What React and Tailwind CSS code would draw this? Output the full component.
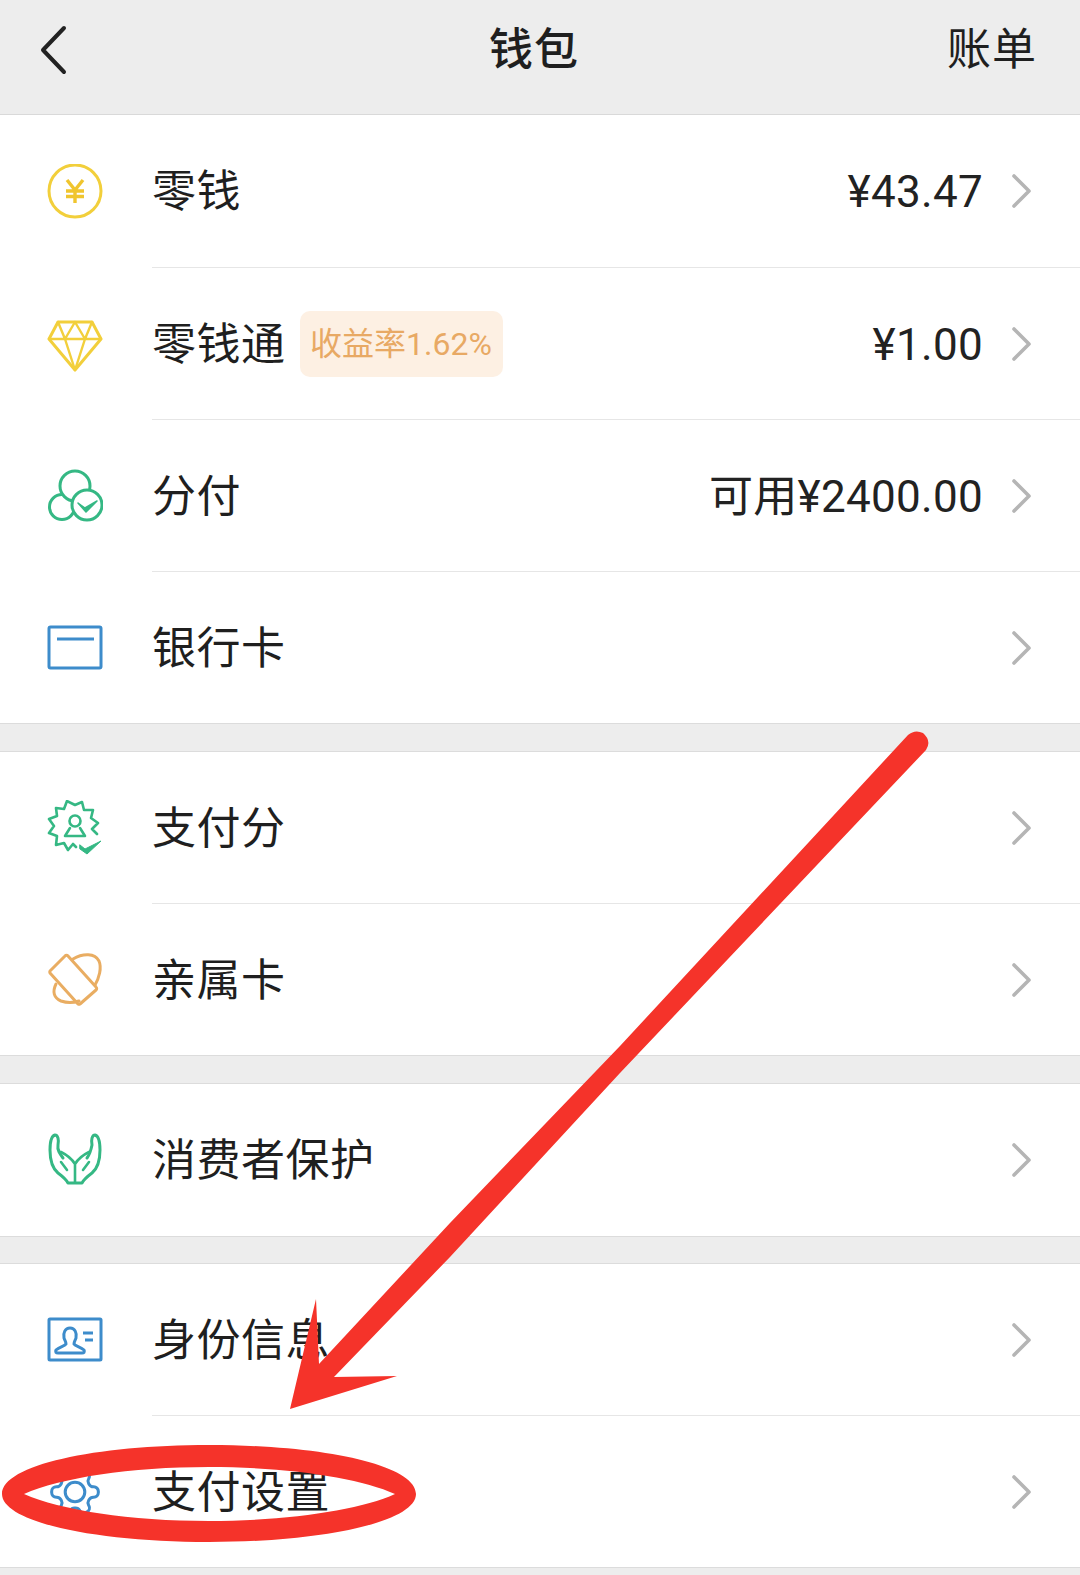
const GREEN = "#35b884";
const BLUE = "#3d8ccb";
const YELLOW = "#f2cf3b";
const ORANGE = "#e9ad62";

function Icon({ children, stroke }) {
  return (
    <svg width="56" height="56" viewBox="0 0 56 56" fill="none" stroke={stroke} strokeWidth="3" strokeLinecap="round" strokeLinejoin="round">
      {children}
    </svg>
  );
}

const ICON_COIN = (
  <Icon stroke={YELLOW}>
    <circle cx="28" cy="27" r="26" />
    <path d="M20 16l8 10 8-10M19 27h18M19 32.5h18M28 26v13" stroke="#f0c52e" strokeWidth="3.4" strokeLinecap="butt" />
  </Icon>
);

const ICON_DIAMOND = (
  <Icon stroke={YELLOW}>
    <path d="M11 6h34l9 17-26 31L2 23z" />
    <path d="M2 23h52M18 23l10 31 10-31M18 23l10-17 10 17M11 6l7 17M45 6l-7 17" strokeWidth="2.4" />
  </Icon>
);

const ICON_FENFU = (
  <Icon stroke={GREEN}>
    <circle cx="15" cy="39" r="12.5" fill="white" />
    <circle cx="28" cy="18" r="15" fill="white" />
    <circle cx="40" cy="37" r="15" fill="white" />
    <path d="M31 35l7 5 12-7-11 11z" fill={GREEN} strokeWidth="1.5" />
  </Icon>
);

const ICON_CARD = (
  <Icon stroke={BLUE}>
    <rect x="2" y="7" width="52" height="41" rx="1.5" />
    <path d="M10 19h37" strokeLinecap="butt" />
  </Icon>
);

const ICON_SCORE = (
  <Icon stroke={GREEN}>
    <path d="M29 47l-3-3-5 6-4-7-8 2 1-9-8-3 5-7-5-7 8-3-1-8 8 1 3-8 8 4 7-3 2 8 9 0-2 8 7 5-6 6 5 5" strokeWidth="2.6" />
    <circle cx="28" cy="21" r="5.5" strokeWidth="2.6" />
    <path d="M18 36l5-8M38 36l-5-8M18 36h20" strokeWidth="2.6" />
    <path d="M33 45l5 4 16-8-14 13-7-5z" fill={GREEN} strokeWidth="1" />
  </Icon>
);

const ICON_FAMILY = (
  <Icon stroke={ORANGE}>
    <path d="M18 4L3 19a2 2 0 0 0 0 2l28 31a2 2 0 0 0 2 0l16-14a2 2 0 0 0 0-3L21 4a2 2 0 0 0-3 0z" />
    <path d="M26 7c10-6 22-6 26 2 3 7 0 17-4 24" />
    <path d="M9 32c-4 8-2 14 5 17 6 2 12 2 18 0" />
  </Icon>
);

const ICON_HANDS = (
  <Icon stroke={GREEN}>
    <path d="M27 51h-6c-2-4-6-7-10-10-6-5-8-12-8-23 0-6 1-14 5-15 3 0 4 5 3 10-1 5 2 9 5 13" />
    <path d="M29 51h6c2-4 6-7 10-10 6-5 8-12 8-23 0-6-1-14-5-15-3 0-4 5-3 10-1 5-2 9-5 13" />
    <path d="M28 51V32c-3-5-8-9-14-12M28 32c3-5 8-9 14-12M20 38l-6-8M36 38l6-8" strokeWidth="2.6" />
  </Icon>
);

const ICON_ID = (
  <Icon stroke={BLUE}>
    <rect x="2" y="7" width="52" height="41" rx="1" />
    <path d="M17 26c-1-5 1-10 6-10s7 5 6 10c-1 3-2 4-2 6 1 2 7 3 10 6 1 2 0 3-2 3H11c-2 0-3-1-2-3 3-3 9-4 10-6 0-2-1-3-2-6z" />
    <path d="M36 21h10M38 28h8" strokeLinecap="butt" />
  </Icon>
);

const ICON_GEAR = (
  <svg width="56" height="56" viewBox="0 0 24 24" fill="none" stroke={BLUE} strokeWidth="1.3" strokeLinecap="round" strokeLinejoin="round" className="rotate-90">
    <path d="M12.22 2h-.44a2 2 0 0 0-2 2v.18a2 2 0 0 1-1 1.73l-.43.25a2 2 0 0 1-2 0l-.15-.08a2 2 0 0 0-2.73.73l-.22.38a2 2 0 0 0 .73 2.73l.15.1a2 2 0 0 1 1 1.72v.51a2 2 0 0 1-1 1.74l-.15.09a2 2 0 0 0-.73 2.73l.22.38a2 2 0 0 0 2.73.73l.15-.08a2 2 0 0 1 2 0l.43.25a2 2 0 0 1 1 1.73V20a2 2 0 0 0 2 2h.44a2 2 0 0 0 2-2v-.18a2 2 0 0 1 1-1.73l.43-.25a2 2 0 0 1 2 0l.15.08a2 2 0 0 0 2.73-.73l.22-.39a2 2 0 0 0-.73-2.73l-.15-.08a2 2 0 0 1-1-1.74v-.5a2 2 0 0 1 1-1.74l.15-.09a2 2 0 0 0 .73-2.73l-.22-.38a2 2 0 0 0-2.73-.73l-.15.08a2 2 0 0 1-2 0l-.43-.25a2 2 0 0 1-1-1.73V4a2 2 0 0 0-2-2z" />
    <circle cx="12" cy="12" r="4.2" />
  </svg>
);

const CHEVRON = (
  <svg width="22" height="36" viewBox="0 0 22 36" fill="none" stroke="#b5b5b5" strokeWidth="3.6" strokeLinecap="round" strokeLinejoin="round">
    <path d="M3 3l15 15L3 33" />
  </svg>
);

function Row({ icon, label, badge, value, last, height = "h-[152px]" }) {
  return (
    <div className={`flex items-center bg-white ${height}`}>
      <div className="ml-[47px] mr-[49px] flex w-[56px] justify-center">{icon}</div>
      <div className={`flex h-full flex-1 items-center pr-[47px] ${last ? "" : "border-b border-[#e6e6e6]"}`}>
        <span className="mt-[2px] text-[44px] leading-none tracking-[0.5px] text-[#1f1f1f]">{label}</span>
        {badge && (
          <span className="ml-[14px] flex h-[66px] w-[203px] items-center justify-center rounded-[10px] bg-[#fdf0e3] text-[32px] text-[#e8a964]">
            {badge}
          </span>
        )}
        {value && <span className="ml-auto mt-[2px] text-[44px] leading-none tracking-[0.3px] text-[#222222]">{value}</span>}
        <span className={value ? "ml-[28px]" : "ml-auto"}>{CHEVRON}</span>
      </div>
    </div>
  );
}

function Group({ children, className = "" }) {
  return <div className={`border-b border-[#dcdcdc] bg-white ${className}`}>{children}</div>;
}

export default function App() {
  return (
    <div className="relative h-[1575px] w-[1080px] overflow-hidden bg-[#ededed] font-['Roboto','Noto_Sans_CJK_SC',sans-serif]">
      <header className="flex h-[115px] items-center justify-between border-b border-[#d9d9d9] pb-[14px] pl-[36px] pr-[43px] text-[#1f1f1f]">
        <svg width="34" height="50" viewBox="0 0 34 50" fill="none" stroke="#222222" strokeWidth="4" strokeLinecap="round" strokeLinejoin="round">
          <path d="M28 3L7 25l21 22" />
        </svg>
        <h1 className="ml-[51px] text-[44px] font-medium leading-none tracking-[1px]">钱包</h1>
        <span className="text-[44px] leading-none tracking-[1px]">账单</span>
      </header>

      <div className="flex flex-col gap-[27px]">
        <Group>
          <Row icon={ICON_COIN} label="零钱" value="¥43.47" height="h-[153px]" />
          <Row icon={ICON_DIAMOND} label="零钱通" badge="收益率1.62%" value="¥1.00" />
          <Row icon={ICON_FENFU} label="分付" value="可用¥2400.00" />
          <Row icon={ICON_CARD} label="银行卡" last height="h-[151px]" />
        </Group>
        <Group className="border-t">
          <Row icon={ICON_SCORE} label="支付分" />
          <Row icon={ICON_FAMILY} label="亲属卡" last height="h-[151px]" />
        </Group>
        <Group className="border-t">
          <Row icon={ICON_HANDS} label="消费者保护" last />
        </Group>
        <Group className="-mt-px border-t">
          <Row icon={ICON_ID} label="身份信息" />
          <Row icon={ICON_GEAR} label="支付设置" last height="h-[151px]" />
        </Group>
      </div>

      {/* red markup drawn over the screenshot */}
      <svg className="pointer-events-none absolute inset-0" width="1080" height="1575" viewBox="0 0 1080 1575">
        <path
          d="M290 1409L316 1299L319 1364L450 1223L620 1046L908 735Q915 729 923 733Q932 741 926 750L620 1073L450 1257L334 1377L397 1376Z"
          fill="#f5332a"
        />
        <path
          fillRule="evenodd"
          fill="#f5332a"
          d="M2 1494C2 1465 95 1445 209 1445C323 1445 416 1465 416 1494C416 1522 323 1542 209 1542C95 1542 2 1522 2 1494ZM24 1494C60 1510 130 1521 209 1521C288 1521 360 1510 395 1494C360 1478 288 1467 209 1467C130 1467 60 1478 24 1494Z"
        />
      </svg>
    </div>
  );
}
